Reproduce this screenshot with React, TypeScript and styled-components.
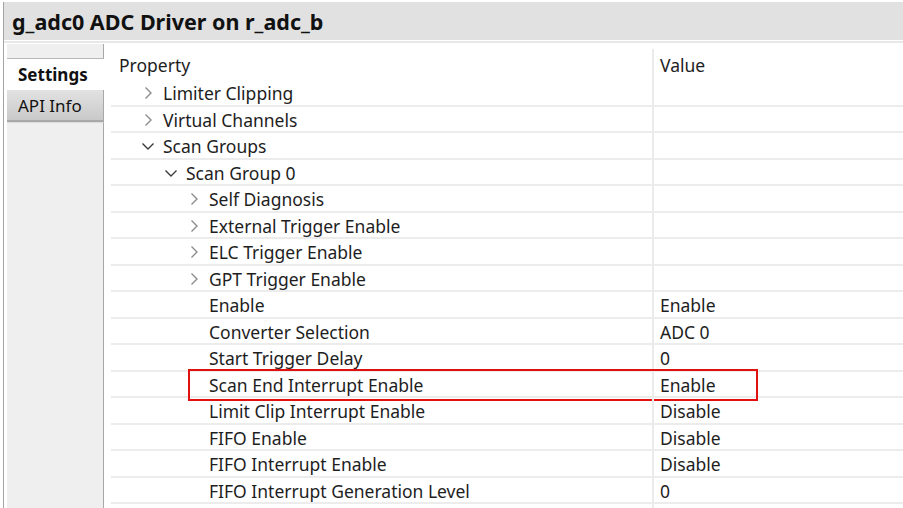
import React from "react";
import styled, { createGlobalStyle } from "styled-components";

const Global = createGlobalStyle`
  html, body { margin: 0; padding: 0; background: #fff; }
  body { font-family: "Noto Sans", "Open Sans", sans-serif; color: #1e1e1e; }
`;

const Frame = styled.div`
  width: 903px;
  height: 508px;
  overflow: hidden;
  background: #fff;
  padding: 2px 0 0 3px;
  box-sizing: border-box;
`;

const Panel = styled.div`
  border-left: 1px solid #a4a4a4;
  height: 100%;
  display: flex;
  flex-direction: column;
`;

const TitleBar = styled.div`
  height: 38px;
  flex-shrink: 0;
  background: #e1e1e1;
  border-bottom: 1px solid #fff;
  padding-left: 8px;
  display: flex;
  align-items: center;
  font-size: 21.5px;
  font-weight: 700;
  color: #111;
`;

const TitleRule = styled.div`
  height: 2px;
  flex-shrink: 0;
  background: #e8e8e8;
`;

const Body = styled.div`
  flex: 1;
  display: flex;
  min-height: 0;
`;

const TabColumn = styled.div`
  width: 100px;
  padding-left: 3px;
  box-sizing: border-box;
  display: flex;
  flex-direction: column;
  padding-top: 1px;
`;

const TabStub = styled.div`
  height: 14px;
  flex-shrink: 0;
  background: #efefef;
  border-bottom: 1px solid #b8b8b8;
  border-right: 1px solid #a8a8a8;
`;

const Tab = styled.div<{ $active?: boolean }>`
  height: ${(p) => (p.$active ? "31px" : "30px")};
  flex-shrink: 0;
  display: flex;
  align-items: center;
  padding-left: 11px;
  font-size: 17px;
  font-weight: ${(p) => (p.$active ? 700 : 400)};
  color: #111;
  background: ${(p) => (p.$active ? "#fff" : "linear-gradient(#e2e2e2, #c9c9c9)")};
  border-right: 1px solid ${(p) => (p.$active ? "#fff" : "#a8a8a8")};
  border-bottom: ${(p) => (p.$active ? "none" : "2px solid #a9a9a9")};
`;

const TabFiller = styled.div`
  flex: 1;
  background: #efefef;
  border-top: 1px solid #dcdcdc;
  border-right: 1px solid #a8a8a8;
`;

const Table = styled.div`
  flex: 1;
  padding-left: 7px;
  display: flex;
  flex-direction: column;
  overflow: hidden;
`;

const HeaderRow = styled.div`
  height: 37px;
  flex-shrink: 0;
  display: grid;
  grid-template-columns: 541px 1fr;
`;

const HeaderCell = styled.div<{ $value?: boolean }>`
  padding-left: ${(p) => (p.$value ? "6px" : "8px")};
  padding-top: 11px;
  font-size: 17.5px;
  line-height: 22px;
  ${(p) =>
    p.$value &&
    `border-left: 2px solid #ebebeb; margin-top: 6px; padding-top: 5px;`}
`;

const Row = styled.div`
  position: relative;
  height: 26.5px;
  flex-shrink: 0;
  display: grid;
  grid-template-columns: 541px 1fr;
  border-bottom: 2px solid #ececec;
  box-sizing: border-box;
`;

const PropCell = styled.div<{ $level: number }>`
  display: flex;
  align-items: center;
  padding-left: ${(p) => 30 + p.$level * 23}px;
  padding-top: 1px;
  font-size: 17.5px;
  white-space: nowrap;
`;

const ValueCell = styled.div`
  display: flex;
  align-items: center;
  padding-left: 6px;
  padding-top: 1px;
  border-left: 2px solid #ebebeb;
  font-size: 17.5px;
`;

const ChevronSlot = styled.span`
  width: 14px;
  height: 14px;
  margin-right: 8px;
  display: inline-flex;
  flex-shrink: 0;
`;

const Highlight = styled.div`
  position: absolute;
  left: 77px;
  top: -3px;
  width: 570px;
  height: 32px;
  border: 2px solid #e31010;
  box-sizing: border-box;
  pointer-events: none;
`;

type Item = {
  label: string;
  level: number;
  chevron?: "right" | "down";
  value?: string;
  mark?: boolean;
};

const items: Item[] = [
  { label: "Limiter Clipping", level: 0, chevron: "right" },
  { label: "Virtual Channels", level: 0, chevron: "right" },
  { label: "Scan Groups", level: 0, chevron: "down" },
  { label: "Scan Group 0", level: 1, chevron: "down" },
  { label: "Self Diagnosis", level: 2, chevron: "right" },
  { label: "External Trigger Enable", level: 2, chevron: "right" },
  { label: "ELC Trigger Enable", level: 2, chevron: "right" },
  { label: "GPT Trigger Enable", level: 2, chevron: "right" },
  { label: "Enable", level: 2, value: "Enable" },
  { label: "Converter Selection", level: 2, value: "ADC 0" },
  { label: "Start Trigger Delay", level: 2, value: "0" },
  { label: "Scan End Interrupt Enable", level: 2, value: "Enable", mark: true },
  { label: "Limit Clip Interrupt Enable", level: 2, value: "Disable" },
  { label: "FIFO Enable", level: 2, value: "Disable" },
  { label: "FIFO Interrupt Enable", level: 2, value: "Disable" },
  { label: "FIFO Interrupt Generation Level", level: 2, value: "0" },
  { label: "", level: 2, value: "" },
];

function Chevron({ dir }: { dir?: "right" | "down" }) {
  return (
    <ChevronSlot>
      {dir === "right" && (
        <svg width="14" height="14" viewBox="0 0 14 14">
          <path d="M4.5 1.5 L10 7 L4.5 12.5" fill="none" stroke="#8c8c8c" strokeWidth="1.4" />
        </svg>
      )}
      {dir === "down" && (
        <svg width="14" height="14" viewBox="0 0 14 14">
          <path d="M1.5 4.5 L7 10 L12.5 4.5" fill="none" stroke="#3c3c3c" strokeWidth="1.4" />
        </svg>
      )}
    </ChevronSlot>
  );
}

export default function App() {
  return (
    <>
      <Global />
      <Frame>
        <Panel>
          <TitleBar>g_adc0 ADC Driver on r_adc_b</TitleBar>
          <TitleRule />
          <Body>
            <TabColumn>
              <TabStub />
              <Tab $active>Settings</Tab>
              <Tab>API Info</Tab>
              <TabFiller />
            </TabColumn>
            <Table>
              <HeaderRow>
                <HeaderCell>Property</HeaderCell>
                <HeaderCell $value>Value</HeaderCell>
              </HeaderRow>
              {items.map((it, i) => (
                <Row key={i}>
                  <PropCell $level={it.level}>
                    {it.label && <Chevron dir={it.chevron} />}
                    {it.label}
                  </PropCell>
                  <ValueCell>{it.value}</ValueCell>
                  {it.mark && <Highlight />}
                </Row>
              ))}
            </Table>
          </Body>
        </Panel>
      </Frame>
    </>
  );
}
